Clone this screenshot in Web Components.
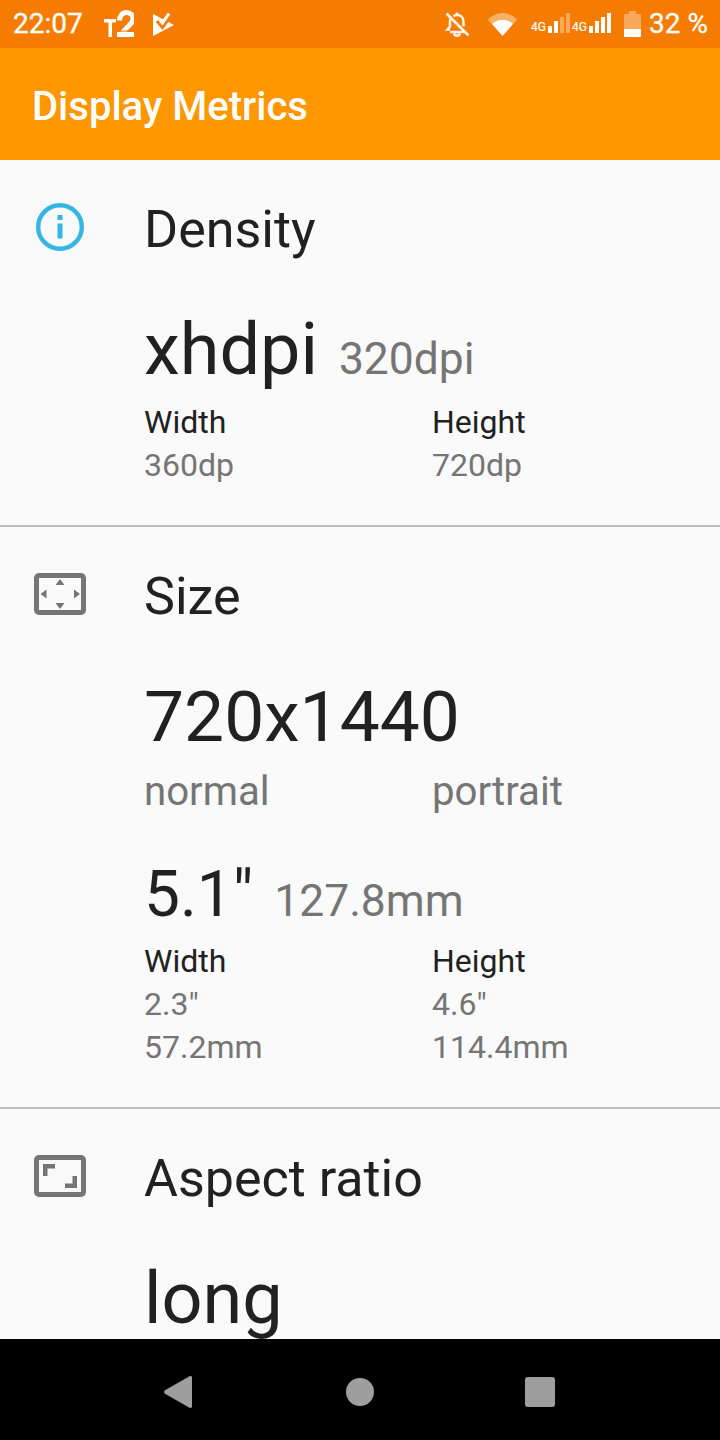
<!DOCTYPE html>
<html>
<head>
<meta charset="utf-8">
<style>
    html, body { margin:0; padding:0; background:#000; }
    body { font-family:Roboto, sans-serif; }
    app-screen { height:1440px; }
</style>
</head>
<body>
<app-screen>
    <status-bar slot="top"></status-bar>
    <app-bar slot="top">Display Metrics</app-bar>

    <metric-section titulo="Density" icono="info" style="height:365px">
        <big-line valor="xhdpi" extra="320dpi"></big-line>
        <two-cols style="margin-top:1px">
            <small-col label="Width" lineas="360dp"></small-col>
            <small-col label="Height" lineas="720dp"></small-col>
        </two-cols>
    </metric-section>

    <metric-section titulo="Size" icono="size" style="height:580px">
        <big-line valor="720x1440" style="font-size:71.3px"></big-line>
        <two-cols style="margin-top:-1px">
            <small-col grande lineas="normal"></small-col>
            <small-col grande lineas="portrait"></small-col>
        </two-cols>
        <mid-line valor="5.1&quot;" extra="127.8mm"></mid-line>
        <two-cols style="margin-top:2px">
            <small-col label="Width" lineas="2.3&quot;|57.2mm"></small-col>
            <small-col label="Height" lineas="4.6&quot;|114.4mm"></small-col>
        </two-cols>
    </metric-section>

    <metric-section titulo="Aspect ratio" icono="ratio" ultimo>
        <big-line valor="long"></big-line>
    </metric-section>

    <nav-bar slot="bottom"></nav-bar>
</app-screen>

<script>
class AppScreen extends HTMLElement {
    constructor() {
        super();
        this.attachShadow({ mode: 'open' });
        this.shadowRoot.innerHTML = `
            <style>
                :host { display:flex; flex-direction:column; width:720px; background:#fafafa; overflow:hidden; }
                .contenido { flex:1; min-height:0; overflow:hidden; }
            </style>
            <slot name="top"></slot>
            <div class="contenido"><slot></slot></div>
            <slot name="bottom"></slot>
        `;
    }
}

class StatusBar extends HTMLElement {
    constructor() {
        super();
        this.attachShadow({ mode: 'open' });
        // barras de señal: las dos últimas quedan tenues en el primer SIM
        const barras = (tenue) => [7, 12, 16, 20].map((h, i) => {
            const op = tenue && i >= 2 ? 0.35 : 1;
            return `<rect x="${i * 6}" y="${20 - h}" width="4" height="${h}" fill="#fff" fill-opacity="${op}"/>`;
        }).join('');
        this.shadowRoot.innerHTML = `
            <style>
                :host { display:flex; align-items:center; height:48px; background:#f57c00; color:#fff; font-family:Roboto, sans-serif; padding:0 12px 0 13px; box-sizing:border-box; }
                .hora { font-size:28px; line-height:48px; width:91px; -webkit-text-stroke:.3px #fff; }
                svg { display:block; flex:none; }
                .der { margin-left:auto; display:flex; align-items:center; }
                .red { position:relative; width:41px; height:24px; }
                .red small { font-size:12px; line-height:12px; position:absolute; left:-1px; top:9px; -webkit-text-stroke:.2px #fff; }
                .red svg { position:absolute; left:16px; top:1px; }
                .pct { font-size:28px; line-height:48px; margin-left:8px; white-space:pre; -webkit-text-stroke:.3px #fff; }
            </style>
            <span class="hora">22:07</span>
            <svg width="30" height="28" viewBox="0 0 30 28" style="margin-right:19px;margin-top:-1px">
                <path d="M0 9h12v3.500H8V27H4.500V12.500H0z" fill="#fff"/>
                <path d="M15.500 10.500C15.500 6 18.500 2.500 22.500 2.500s6.500 2.800 6.500 6.500c0 5-7 8-11.500 15" fill="none" stroke="#fff" stroke-width="5"/>
                <rect x="13" y="22" width="17" height="5" fill="#fff"/>
                <path d="M13 21.500 30 20.500" stroke="#f57c00" stroke-width="1"/>
            </svg>
            <svg width="22" height="23" viewBox="0 0 22 23">
                <path d="M0 1 21 12 0 23z" fill="#fff"/>
                <path d="M4 8 9.500 14.500 18.500 2" fill="none" stroke="#f57c00" stroke-width="3"/>
                <path d="M7 7 9.500 10 16 .500" fill="none" stroke="#fff" stroke-width="3"/>
            </svg>
            <div class="der">
                <svg width="28" height="28" viewBox="0 0 28 28" style="margin-right:17px" fill="none" stroke="#fff" stroke-opacity=".9" stroke-width="2.600">
                    <path d="M7 19.500h-2.500l2.500-3v-5c0-1 .2-2 .7-2.800M10.500 6.200c1-.7 2-1.200 3.500-1.200 4 0 6.500 3 6.500 6.500v5M21 22H7"/>
                    <path d="M11 23.500c.5 1.500 1.700 2 3 2s2.500-.5 3-2" />
                    <path d="M14 2.500V5" />
                    <path d="M3.500 3.500 25.500 25.500" />
                </svg>
                <svg width="29" height="25" viewBox="0 0 32 26" preserveAspectRatio="none" style="margin-right:15px">
                    <path d="M0 8C4.500 3.500 10 1 16 1s11.500 2.500 16 7L16 25z" fill="#fff" fill-opacity=".4"/>
                    <path d="M4.500 12.500C8 9.500 12 8 16 8s8 1.500 11.500 4.500L16 25z" fill="#fff"/>
                </svg>
                <div class="red"><small>4G</small><svg width="22" height="20" viewBox="0 0 22 20">${barras(true)}</svg></div>
                <div class="red"><small>4G</small><svg width="22" height="20" viewBox="0 0 22 20">${barras(false)}</svg></div>
                <svg width="17" height="26" viewBox="0 0 17 26" style="margin-left:10px">
                    <path d="M5 0h7v3h4a1 1 0 0 1 1 1v21a1 1 0 0 1-1 1H1a1 1 0 0 1-1-1V4a1 1 0 0 1 1-1h4z" fill="#fff" fill-opacity=".35"/>
                    <path d="M0 18h17v7a1 1 0 0 1-1 1H1a1 1 0 0 1-1-1z" fill="#fff"/>
                </svg>
                <span class="pct">32 %</span>
            </div>
        `;
    }
}

class AppBar extends HTMLElement {
    constructor() {
        super();
        this.attachShadow({ mode: 'open' });
        this.shadowRoot.innerHTML = `
            <style>
                :host { display:flex; align-items:center; height:112px; padding:4px 0 0 32px; box-sizing:border-box; background:#ff9800; color:#fff; font:500 40px Roboto, sans-serif; }
            </style>
            <slot></slot>
        `;
    }
}

const ICONOS = {
    info: `<svg width="48" height="48" viewBox="0 0 48 48">
            <circle cx="24" cy="24" r="21.800" fill="none" stroke="#33b5e5" stroke-width="4.400"/>
            <rect x="21.500" y="12" width="5" height="5" fill="#33b5e5"/>
            <rect x="21.500" y="20.500" width="5" height="15" fill="#33b5e5"/>
        </svg>`,
    size: `<svg width="52" height="42" viewBox="0 0 52 42">
            <rect x="2.500" y="2.500" width="47" height="37" rx="2.500" fill="none" stroke="#757575" stroke-width="5"/>
            <path d="M26 6l4.500 6h-9zM26 36l-4.500-6h9zM6.500 21l6-4.500v9zM46 21l-6-4.500v9z" fill="#757575"/>
        </svg>`,
    ratio: `<svg width="52" height="42" viewBox="0 0 52 42">
            <rect x="2.500" y="2.500" width="47" height="37" rx="2.500" fill="none" stroke="#757575" stroke-width="5"/>
            <path d="M9 9h12v4.500h-7.500V21H9zM43 33H31v-4.500h7.500V21H43z" fill="#757575"/>
        </svg>`,
};

class MetricSection extends HTMLElement {
    constructor() {
        super();
        this.attachShadow({ mode: 'open' });
        const icono = ICONOS[this.getAttribute('icono')] || '';
        this.shadowRoot.innerHTML = `
            <style>
                :host { display:block; box-sizing:content-box; border-bottom:2px solid #bdbdbd; color:#212121; font-family:Roboto, sans-serif; }
                :host([ultimo]) { border-bottom:none; }
                .cabecera { display:flex; align-items:center; height:140px; }
                .icono { width:144px; display:flex; padding-left:34px; box-sizing:border-box; margin-bottom:6px; }
                :host([icono="info"]) .icono { padding-left:36px; }
                h2 { margin:0; font-weight:400; font-size:52px; line-height:140px; }
                .cuerpo { padding-left:144px; }
            </style>
            <div class="cabecera">
                <div class="icono">${icono}</div>
                <h2>${this.getAttribute('titulo')}</h2>
            </div>
            <div class="cuerpo"><slot></slot></div>
        `;
    }
}

class BigLine extends HTMLElement {
    constructor() {
        super();
        this.attachShadow({ mode: 'open' });
        const extra = this.getAttribute('extra');
        this.shadowRoot.innerHTML = `
            <style>
                :host { display:flex; align-items:baseline; gap:21px; height:100px; line-height:100px; font-size:72px; color:#212121; }
                span { font-size:44.400px; color:#757575; }
            </style>
            <div>${this.getAttribute('valor')}</div>
            ${extra ? `<span>${extra}</span>` : ''}
        `;
    }
}

class MidLine extends HTMLElement {
    constructor() {
        super();
        this.attachShadow({ mode: 'open' });
        this.shadowRoot.innerHTML = `
            <style>
                :host { display:flex; align-items:baseline; gap:21px; height:86px; line-height:86px; margin-top:34px; font-size:64px; color:#212121; }
                span { font-size:44.400px; color:#757575; }
            </style>
            <div>${this.getAttribute('valor')}</div>
            <span>${this.getAttribute('extra')}</span>
        `;
    }
}

class TwoCols extends HTMLElement {
    constructor() {
        super();
        this.attachShadow({ mode: 'open' });
        this.shadowRoot.innerHTML = `
            <style>
                :host { display:grid; grid-template-columns:288px 1fr; }
            </style>
            <slot></slot>
        `;
    }
}

class SmallCol extends HTMLElement {
    constructor() {
        super();
        this.attachShadow({ mode: 'open' });
        const label = this.getAttribute('label');
        const lineas = this.getAttribute('lineas').split('|');
        this.shadowRoot.innerHTML = `
            <style>
                :host { display:block; font-size:32px; line-height:43px; color:#757575; }
                :host([grande]) { font-size:40.200px; line-height:52px; }
                .label { color:#212121; }
            </style>
            ${label ? `<div class="label">${label}</div>` : ''}
            ${lineas.map(l => `<div>${l}</div>`).join('')}
        `;
    }
}

class NavBar extends HTMLElement {
    constructor() {
        super();
        this.attachShadow({ mode: 'open' });
        this.shadowRoot.innerHTML = `
            <style>
                :host { display:flex; justify-content:center; align-items:center; height:101px; background:#000; padding:5px 2px 0 0; box-sizing:border-box; }
                svg { display:block; }
            </style>
            <svg width="28" height="32" viewBox="0 0 28 32" style="margin-right:154px"><path d="M1 14.300 25.500.300c1.200-.6 2.500 0 2.500 1.200v29c0 1.200-1.300 1.800-2.500 1.200L1 17.700c-1.300-.8-1.300-2.600 0-3.400z" fill="#9e9e9e"/></svg>
            <svg width="28" height="28" viewBox="0 0 28 28" style="margin-right:151px"><circle cx="14" cy="14" r="14" fill="#9e9e9e"/></svg>
            <svg width="30" height="30" viewBox="0 0 30 30"><rect width="30" height="30" rx="3" fill="#9e9e9e"/></svg>
        `;
    }
}

customElements.define('app-screen', AppScreen);
customElements.define('status-bar', StatusBar);
customElements.define('app-bar', AppBar);
customElements.define('metric-section', MetricSection);
customElements.define('big-line', BigLine);
customElements.define('mid-line', MidLine);
customElements.define('two-cols', TwoCols);
customElements.define('small-col', SmallCol);
customElements.define('nav-bar', NavBar);
</script>
</body>
</html>
